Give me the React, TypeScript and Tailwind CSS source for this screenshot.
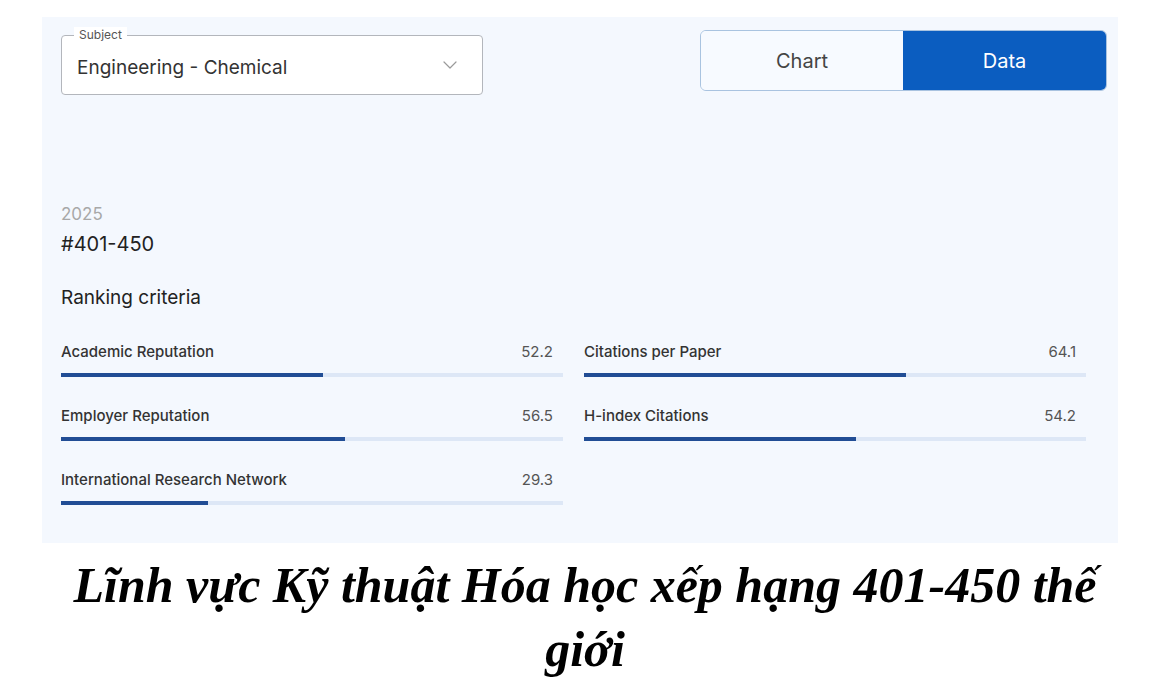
import { ChevronDown } from "lucide-react";

type Criterion = { label: string; score: number };

const LEFT: Criterion[] = [
  { label: "Academic Reputation", score: 52.2 },
  { label: "Employer Reputation", score: 56.5 },
  { label: "International Research Network", score: 29.3 },
];

const RIGHT: Criterion[] = [
  { label: "Citations per Paper", score: 64.1 },
  { label: "H-index Citations", score: 54.2 },
];

function CriterionRow({ c }: { c: Criterion }) {
  return (
    <div className="h-[64px]">
      <div className="flex items-center justify-between pr-[10px] h-[22px] text-[15px] text-[#333]">
        <span className="font-medium">{c.label}</span>
        <span className="text-[#555]">{c.score}</span>
      </div>
      <div className="mt-[10px] h-[4px] bg-[#dde7f6]">
        <div className="h-full bg-[#214d95]" style={{ width: `${c.score}%` }} />
      </div>
    </div>
  );
}

export default function App() {
  return (
    <div className="w-[1170px] h-[689px] bg-white" style={{ fontFamily: "Inter, 'Noto Sans', sans-serif" }}>
      <div className="ml-[42px] pt-[17px]">
        <div className="w-[1076px] h-[526px] bg-[#f4f8fe] pl-[19px] pr-[11px]">
          <div className="flex items-start justify-between">
            <div className="relative mt-[18px] w-[422px] h-[60px] rounded-[4px] border border-[#b3b6bc] bg-white flex items-center pl-[15px] pr-[20px]">
              <span className="absolute -top-[9px] left-[12px] px-[5px] bg-white text-[12px] leading-[16px] text-[#555]">
                Subject
              </span>
              <span className="flex-1 pt-[6px] text-[19px] text-[#333]">Engineering - Chemical</span>
              <ChevronDown size={24} strokeWidth={1.2} className="text-[#9a9a9a]" />
            </div>
            <div className="mt-[13px] flex w-[407px] h-[61px] rounded-[6px] border border-[#a9c3e0] overflow-hidden text-[20px]">
              <div className="flex-1 flex items-center justify-center bg-[#f7faff] text-[#444]">Chart</div>
              <div className="w-[203px] flex items-center justify-center bg-[#0b5dc0] text-white">Data</div>
            </div>
          </div>

          <div className="mt-[108px] text-[17px] leading-[22px] text-[#a8a8a8]">2025</div>
          <div className="mt-[7px] text-[20px] leading-[24px] text-[#222]">#401-450</div>
          <div className="mt-[30px] text-[19px] leading-[24px] text-[#222]">Ranking criteria</div>

          <div className="mt-[31px] grid grid-cols-2 gap-x-[21px] w-[1025px]">
            <div>
              {LEFT.map((c) => (
                <CriterionRow key={c.label} c={c} />
              ))}
            </div>
            <div>
              {RIGHT.map((c) => (
                <CriterionRow key={c.label} c={c} />
              ))}
            </div>
          </div>
        </div>
      </div>
      <h1
        className="mt-[10px] px-[60px] text-center text-[50px] leading-[64px] font-bold italic text-black"
        style={{ fontFamily: "'Liberation Serif', serif" }}
      >
        Lĩnh vực Kỹ thuật Hóa học xếp hạng 401-450 thế giới
      </h1>
    </div>
  );
}
